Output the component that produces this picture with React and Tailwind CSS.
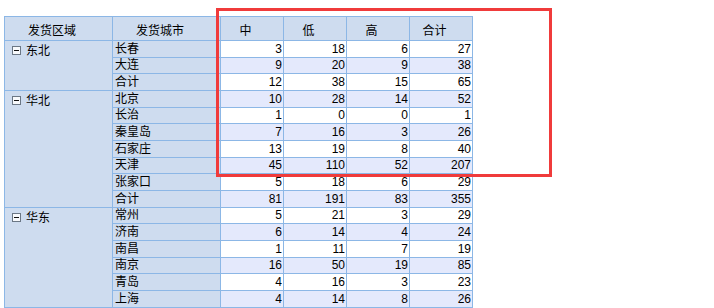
import React from 'react'

const regions = [
  {
    name: '东北',
    rows: [
      ['长春', 3, 18, 6, 27],
      ['大连', 9, 20, 9, 38],
      ['合计', 12, 38, 15, 65],
    ],
  },
  {
    name: '华北',
    rows: [
      ['北京', 10, 28, 14, 52],
      ['长治', 1, 0, 0, 1],
      ['秦皇岛', 7, 16, 3, 26],
      ['石家庄', 13, 19, 8, 40],
      ['天津', 45, 110, 52, 207],
      ['张家口', 5, 18, 6, 29],
      ['合计', 81, 191, 83, 355],
    ],
  },
  {
    name: '华东',
    rows: [
      ['常州', 5, 21, 3, 29],
      ['济南', 6, 14, 4, 24],
      ['南昌', 1, 11, 7, 19],
      ['南京', 16, 50, 19, 85],
      ['青岛', 4, 16, 3, 23],
      ['上海', 4, 14, 8, 26],
    ],
  },
]

const spans = { 3: 'row-span-3', 7: 'row-span-7', 6: 'row-span-6' }

function MinusBox() {
  return (
    <svg width="9" height="9" viewBox="0 0 9 9" className="shrink-0">
      <rect x="0.5" y="0.5" width="8" height="8" fill="#f7f9fc" stroke="#6b7785" />
      <line x1="2" y1="4.5" x2="7" y2="4.5" stroke="#111" />
    </svg>
  )
}

function HeaderCell({ children }) {
  return (
    <div className="flex items-center justify-center bg-[#cedcef] pt-[5px] pr-[13px] text-[12px] leading-[16px] text-black">
      {children}
    </div>
  )
}

export default function App() {
  let rowIndex = 0

  return (
    <div className="relative h-[308px] w-[714px] overflow-hidden bg-white font-['Liberation_Sans','Noto_Sans_CJK_SC',sans-serif]">
      <div className="absolute left-[4px] top-[16px] grid grid-cols-[107px_107px_62px_62px_62px_62px] grid-rows-[23px] auto-rows-[15.67px] gap-px bg-[#8cb7e6] p-px">
        <HeaderCell>发货区域</HeaderCell>
        <HeaderCell>发货城市</HeaderCell>
        <HeaderCell>中</HeaderCell>
        <HeaderCell>低</HeaderCell>
        <HeaderCell>高</HeaderCell>
        <HeaderCell>合计</HeaderCell>

        {regions.map((region) => (
          <React.Fragment key={region.name}>
            <div
              className={`${spans[region.rows.length]} col-start-1 flex items-start gap-[5px] bg-[#cedcef] pl-[7px] pt-[4px] text-[12px] leading-[16px] text-black`}
            >
              <span className="mt-[1px]">
                <MinusBox />
              </span>
              <span className="-mt-[2px]">{region.name}</span>
            </div>
            {region.rows.map((row) => {
              const striped = rowIndex++ % 2 === 1
              const dataBg = striped ? 'bg-[#e4e9fc]' : 'bg-white'
              return (
                <React.Fragment key={region.name + row[0]}>
                  <div className="flex items-center bg-[#cedcef] pl-[2px] text-[12px] leading-[16px] text-black">
                    {row[0]}
                  </div>
                  {row.slice(1).map((v, i) => (
                    <div
                      key={i}
                      className={`flex items-center justify-end ${dataBg} pr-[1px] text-[12px] leading-[16px] text-black`}
                    >
                      {v}
                    </div>
                  ))}
                </React.Fragment>
              )
            })}
          </React.Fragment>
        ))}
      </div>

      <div className="absolute left-[216px] top-[8px] h-[169px] w-[336px] border-[3px] border-[#f03b3b]" />
    </div>
  )
}
